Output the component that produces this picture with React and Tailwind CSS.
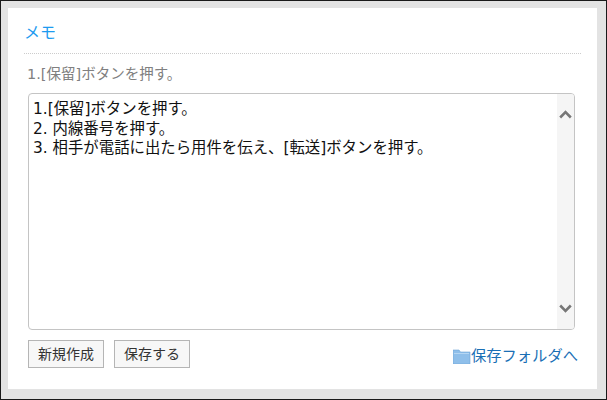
import React from "react";

const font = { fontFamily: '"DejaVu Sans", "Noto Sans CJK JP", sans-serif' };

function Chevron({ down }) {
  return (
    <svg width="13" height="9" viewBox="0 0 13 9" className={down ? "rotate-180" : ""}>
      <path d="M1.2 7.5 L6.5 2.2 L11.8 7.5" fill="none" stroke="#777777" strokeWidth="2.6" />
    </svg>
  );
}

function FolderIcon() {
  return (
    <svg width="18" height="15" viewBox="0 0 18 15">
      <path d="M0 1h6l1.5 2H17v12H0z" fill="#8fbfea" stroke="#6fa5d6" strokeWidth="0.6" />
      <path d="M1 4h15v1H1z" fill="#b5d6f3" />
    </svg>
  );
}

export default function App() {
  return (
    <div
      className="w-[607px] h-[400px] border border-[#1a1a1a] bg-[#e3e3e3] pt-[7px] pl-[7px] pr-[9px] pb-[10px]"
      style={font}
    >
      <div className="h-[381px] w-[589px] bg-white pt-[14px] pl-4 pr-4 flex flex-col">
        <h1 className="text-[16px] leading-[21px] font-normal text-[#1d9bf0]">メモ</h1>
        <div className="mt-[10px] border-t border-dotted border-[#cccccc]" />
        <p className="mt-[10px] pl-[3px] text-[14.5px] leading-[20px] text-[#808080]">1.[保留]ボタンを押す。</p>
        <div className="mt-[9px] ml-[4px] w-[547px] h-[237px] border border-[#c4c4c4] rounded-[4px] flex overflow-hidden">
          <div className="flex-1 pt-[6px] pl-[4px] text-[15.4px] leading-[19.5px] text-[#111111]">
            <div>1.[保留]ボタンを押す。</div>
            <div>2. 内線番号を押す。</div>
            <div>3. 相手が電話に出たら用件を伝え、[転送]ボタンを押す。</div>
          </div>
          <div className="w-[17px] bg-[#f5f5f5] flex flex-col items-center justify-between py-[16px]">
            <Chevron />
            <Chevron down />
          </div>
        </div>
        <div className="mt-[10px] ml-[4px] flex items-start justify-between">
          <div className="flex gap-[10px]">
            <button className="w-[76px] h-[28px] border border-[#b5b5b5] bg-[#f7f7f7] text-[14px] text-[#333333]">新規作成</button>
            <button className="w-[76px] h-[28px] border border-[#b5b5b5] bg-[#f7f7f7] text-[14px] text-[#333333]">保存する</button>
          </div>
          <a className="mt-[6px] mr-[3px] flex items-center text-[15.3px] leading-[20px] text-[#1a6fb5]">
            <FolderIcon />
            <span>保存フォルダへ</span>
          </a>
        </div>
      </div>
    </div>
  );
}
